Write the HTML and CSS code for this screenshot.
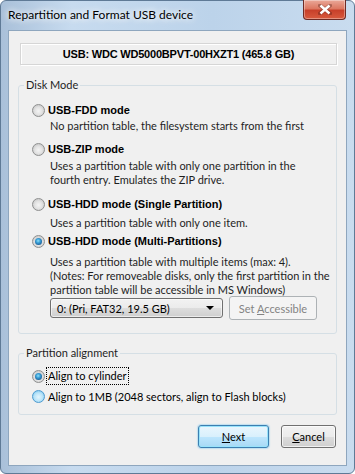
FILE: index.html
```html
<!DOCTYPE html>
<html lang="en">
<head>
    <meta charset="UTF-8">
    <meta name="viewport" content="width=device-width, initial-scale=1.0">
    <title>Repartition and Format USB device</title>
    <link rel="stylesheet" href="styles.css">
</head>
<body>

    <div class="window">
        <!-- Title bar -->
        <div class="titlebar">
            <span class="title">Repartition and Format USB device</span>
            <div class="close-btn">
                <svg width="14" height="11" viewBox="0 0 14 11">
                    <path d="M2 1.5 L12 9.5 M12 1.5 L2 9.5" stroke="#4a1a14" stroke-width="4" stroke-linecap="square" opacity="0.35"/>
                    <path d="M2.5 1.5 L11.5 9.5 M11.5 1.5 L2.5 9.5" stroke="#fff" stroke-width="2.4"/>
                </svg>
            </div>
        </div>

        <div class="client">
            <div class="device-box">USB: WDC WD5000BPVT-00HXZT1 (465.8 GB)</div>

            <fieldset class="group disk-mode">
                <legend>Disk Mode</legend>

                <div class="option opt-fdd">
                    <div class="opt-head"><span class="radio"></span><span class="opt-label">USB-FDD mode</span></div>
                    <div class="opt-desc">No partition table, the filesystem starts from the first</div>
                </div>

                <div class="option opt-zip">
                    <div class="opt-head"><span class="radio"></span><span class="opt-label">USB-ZIP mode</span></div>
                    <div class="opt-desc">Uses a partition table with only one partition in the<br>fourth entry. Emulates the ZIP drive.</div>
                </div>

                <div class="option opt-single">
                    <div class="opt-head"><span class="radio"></span><span class="opt-label">USB-HDD mode (Single Partition)</span></div>
                    <div class="opt-desc">Uses a partition table with only one item.</div>
                </div>

                <div class="option opt-multi">
                    <div class="opt-head"><span class="radio checked"></span><span class="opt-label">USB-HDD mode (Multi-Partitions)</span></div>
                    <div class="opt-desc">Uses a partition table with multiple items (max: 4).<br>(Notes: For removeable disks, only the first partition in the<br>partition table will be accessible in MS Windows)</div>
                    <div class="part-row">
                        <div class="combo">
                            <span>0: (Pri, FAT32, 19.5 GB)</span>
                            <span class="arrow"></span>
                        </div>
                        <button class="btn disabled">Set <u>A</u>ccessible</button>
                    </div>
                </div>
            </fieldset>

            <fieldset class="group align">
                <legend>Partition alignment</legend>
                <div class="align-opt"><span class="radio checked"></span><span class="focus">Align to cylinder</span></div>
                <div class="align-opt"><span class="radio hover"></span><span class="align-text">Align to 1MB (2048 sectors, align to Flash blocks)</span></div>
            </fieldset>

            <div class="actions">
                <button class="btn default"><u>N</u>ext</button>
                <button class="btn cancel"><u>C</u>ancel</button>
            </div>
        </div>
    </div>

</body>
</html>
```

FILE: styles.css
```css
body {
    margin: 0;
    background-color: #fff;
    font-family: Lato, "Liberation Sans", sans-serif;
    font-size: 11px;
    color: #000;
}

.window {
    width: 355px;
    height: 474px;
    box-sizing: border-box;
    padding: 0 7px 7px 7px;
    border: 1px solid #5f7a96;
    border-radius: 6px;
    background: linear-gradient(to right, #a9c0d9 0%, #c7dbef 20%, #bcd3ea 60%, #c9dcef 100%);
    display: flex;
    flex-direction: column;
}

.titlebar {
    height: 29px;
    flex: none;
    display: flex;
    align-items: flex-start;
    justify-content: space-between;
}

    .titlebar .title {
        margin-top: 6px;
        color: #000;
        font-size: 12px;
        line-height: 16px;
        text-shadow: 0 0 8px #fff, 0 0 6px #fff;
    }

.close-btn {
    width: 43px;
    height: 20px;
    margin-top: -1px;
    margin-right: 1px;
    box-sizing: border-box;
    border: 1px solid #6e2b25;
    border-top: none;
    border-radius: 0 0 4px 4px;
    background: linear-gradient(to bottom, #eaa898 0%, #dc7862 45%, #c8402a 55%, #d85a3e 100%);
    box-shadow: inset 0 0 0 1px rgba(255,255,255,0.35);
    display: flex;
    align-items: center;
    justify-content: center;
}

.client {
    flex: 1;
    box-sizing: border-box;
    border: 1px solid #8ea6be;
    background-color: #f0f0f0;
    padding: 0 9px 0 9px;
    display: flex;
    flex-direction: column;
}

    .client > * {
        flex: none;
    }

.device-box {
    margin: 12px 0 0 2px;
    height: 22px;
    box-sizing: border-box;
    border: 1px solid #d6d6d6;
    box-shadow: inset 1px 1px 0 #fff, 1px 1px 0 #fff;
    display: flex;
    align-items: center;
    justify-content: center;
    font-family: "Liberation Sans", Arial, sans-serif;
    font-weight: bold;
    font-size: 11px;
    letter-spacing: -0.2px;
}

/* Group boxes */
.group {
    margin: 0;
    min-width: 0;
    border: 1px solid #d5dfe5;
    border-radius: 3px;
    padding: 10px 0 13px 13px;
}

    .group legend {
        margin-left: -8px;
        padding: 0 2px;
        line-height: 14px;
        color: #1e1e1e;
    }

.disk-mode {
    margin-top: 13px;
}

.opt-head {
    display: flex;
    align-items: center;
    height: 16px;
}

.opt-label {
    margin-left: 3px;
    font-family: "Liberation Sans", Arial, sans-serif;
    font-weight: bold;
    font-size: 11px;
}

.opt-desc {
    padding-left: 18px;
    line-height: 14px;
    margin-top: 1px;
    color: #1e1e1e;
    white-space: nowrap;
}

.opt-zip {
    margin-top: 8px;
}

    .opt-zip .opt-desc {
        margin-top: 2px;
    }

.opt-single {
    margin-top: 9px;
}

    .opt-single .opt-desc {
        margin-top: 4px;
    }

.opt-multi {
    margin-top: 3px;
}

    .opt-multi .opt-desc {
        margin-top: 6px;
    }

.part-row {
    display: flex;
    align-items: center;
    gap: 6px;
    margin: -1px 0 0 18px;
}

.combo {
    width: 173px;
    height: 20px;
    box-sizing: border-box;
    border: 1px solid #707070;
    border-radius: 3px;
    background: linear-gradient(to bottom, #f2f2f2 0%, #ebebeb 50%, #dddddd 51%, #cfcfcf 100%);
    box-shadow: inset 0 0 0 1px rgba(255,255,255,0.6);
    display: flex;
    align-items: center;
    justify-content: space-between;
    padding: 0 8px 0 6px;
}

    .combo .arrow {
        width: 0;
        height: 0;
        border-left: 4px solid transparent;
        border-right: 4px solid transparent;
        border-top: 4px solid #000;
    }

/* Buttons */
.btn {
    font-family: inherit;
    font-size: 11px;
    color: #000;
    height: 23px;
    box-sizing: border-box;
    border: 1px solid #707070;
    border-radius: 3px;
    background: linear-gradient(to bottom, #f2f2f2 0%, #ebebeb 50%, #dddddd 51%, #cfcfcf 100%);
    box-shadow: inset 0 0 0 1px rgba(255,255,255,0.7);
    padding: 0;
    margin: 0;
}

    .btn.disabled {
        width: 88px;
        height: 24px;
        border-color: #adb2b5;
        background: #f4f4f4;
        color: #838383;
        box-shadow: none;
    }

    .btn.default {
        width: 71px;
        border-color: #3c7fb1;
        background: linear-gradient(to bottom, #eaf6fd 0%, #d9f0fc 50%, #bee6fd 51%, #a7d9f5 100%);
        box-shadow: inset 0 0 0 1px #98e3fb, 0 0 1px 1px rgba(120,200,240,0.4);
    }

    .btn.cancel {
        width: 55px;
    }

/* Radio buttons */
.radio {
    width: 13px;
    height: 13px;
    flex: none;
    box-sizing: border-box;
    border-radius: 50%;
    border: 1px solid #8e8f8f;
    background: radial-gradient(circle at 50% 55%, #f4f4f4 0%, #e2e2e2 45%, #cfcfcf 70%, #f5f5f5 100%);
    position: relative;
}

    .radio.checked::after {
        content: "";
        position: absolute;
        left: 2px;
        top: 2px;
        width: 7px;
        height: 7px;
        border-radius: 50%;
        background: radial-gradient(circle at 45% 40%, #8fe1f8 0%, #3aa0d8 35%, #1b5f97 75%, #123e66 100%);
    }

    .radio.hover {
        border-color: #4e9bcf;
        background: radial-gradient(circle at 50% 55%, #e4f5fd 0%, #b9e4f9 50%, #8fd0f2 75%, #dff3fd 100%);
    }

.align {
    margin-top: 12px;
    padding: 7px 0 9px 13px;
}

.align-opt {
    display: flex;
    align-items: center;
    height: 18px;
}

    .align-opt + .align-opt {
        margin-top: 2px;
    }

.focus {
    margin-left: 2px;
    padding: 0 1px;
    outline: 1px dotted #000;
    line-height: 16px;
}

.align-text {
    margin-left: 3px;
}

.actions {
    display: flex;
    justify-content: flex-end;
    gap: 12px;
    margin-top: 10px;
    padding-right: 1px;
}
```
